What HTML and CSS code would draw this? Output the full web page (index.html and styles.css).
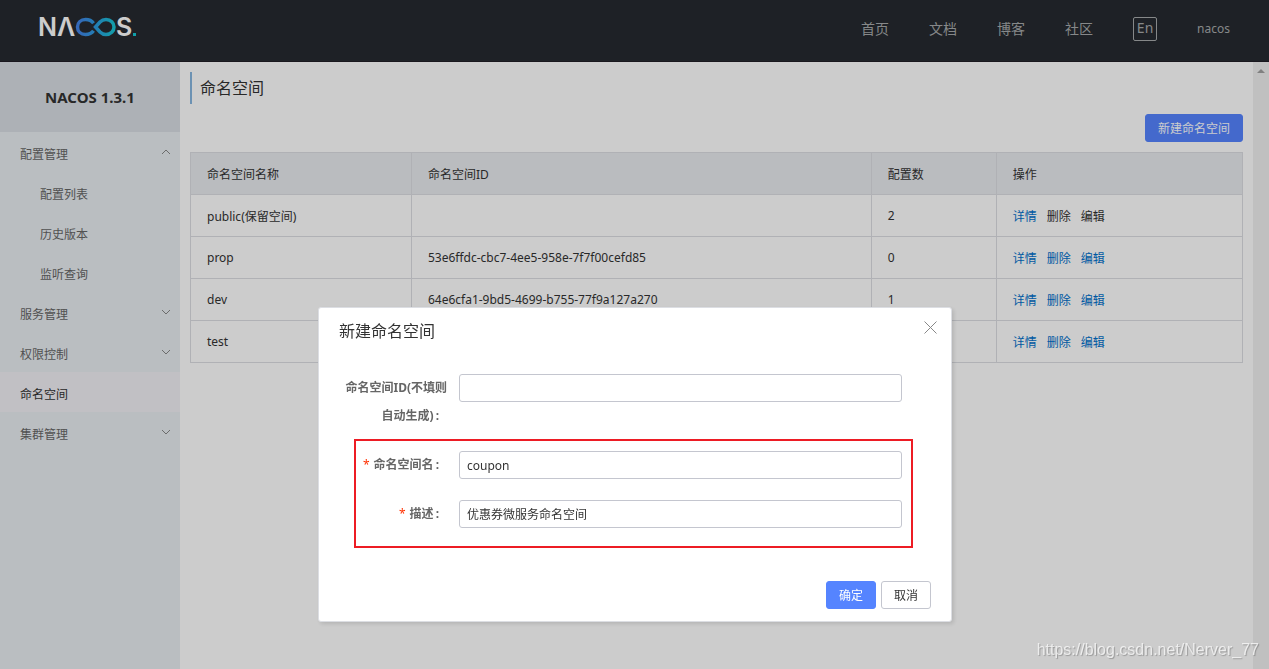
FILE: index.html
```html
<!DOCTYPE html>
<html lang="zh-CN">
<head>
<meta charset="utf-8">
<title>Nacos</title>
<link rel="stylesheet" href="styles.css">
</head>
<body>
<header class="topbar">
  <a class="logo" href="#">
    <svg width="104" height="36" viewBox="-4 -6 104 36" role="img" aria-label="NACOS.">
      <defs>
        <linearGradient id="loop" gradientUnits="userSpaceOnUse" x1="37" y1="0" x2="76" y2="0">
          <stop offset="0" stop-color="#4482e8"/>
          <stop offset="0.5" stop-color="#2b9fe0"/>
          <stop offset="1" stop-color="#16c9d4"/>
        </linearGradient>
      </defs>
      <text class="logo-text" x="-2" y="19">N</text>
      <text class="logo-text" x="17" y="19">Λ</text>
      <path d="M53.500 6.200C51.800 3.800 49.200 2.500 45.600 2.500C40.700 2.500 37.500 5.800 37.500 10S40.700 17.500 45.600 17.500C49.200 17.500 51.800 16.200 53.500 13.800M55.500 10L60 5C61.800 3.200 63.700 2.500 66 2.500C70.800 2.500 74 5.800 74 10S70.800 17.500 66 17.500C63.700 17.500 61.800 16.800 60 15Z" fill="none" stroke="url(#loop)" stroke-width="3.500"/>
      <text class="logo-text" x="76" y="19">S</text>
      <rect x="93" y="16" width="3" height="3" fill="#16c9d4"/>
    </svg>
  </a>
  <nav class="topnav">
    <a href="#">首页</a>
    <a href="#">文档</a>
    <a href="#">博客</a>
    <a href="#">社区</a>
    <button class="lang" type="button">En</button>
    <a class="user" href="#">nacos</a>
  </nav>
</header>
<div class="layout">
  <aside class="sidebar">
    <h1 class="product">NACOS 1.3.1</h1>
    <nav class="menu">
      <a href="#">配置管理<svg class="chevron" width="10" height="6" viewBox="0 0 10 6"><path d="M1 5L5 1L9 5"/></svg></a>
      <a class="sub" href="#">配置列表</a>
      <a class="sub" href="#">历史版本</a>
      <a class="sub" href="#">监听查询</a>
      <a href="#">服务管理<svg class="chevron" width="10" height="6" viewBox="0 0 10 6"><path d="M1 1L5 5L9 1"/></svg></a>
      <a href="#">权限控制<svg class="chevron" width="10" height="6" viewBox="0 0 10 6"><path d="M1 1L5 5L9 1"/></svg></a>
      <a class="current" href="#">命名空间</a>
      <a href="#">集群管理<svg class="chevron" width="10" height="6" viewBox="0 0 10 6"><path d="M1 1L5 5L9 1"/></svg></a>
    </nav>
  </aside>
  <main class="content">
    <h2 class="page-title">命名空间</h2>
    <div class="toolbar"><button class="btn primary" type="button">新建命名空间</button></div>
    <table class="grid">
      <colgroup><col class="col-name"><col class="col-id"><col class="col-count"><col class="col-ops"></colgroup>
      <thead><tr><th>命名空间名称</th><th>命名空间ID</th><th>配置数</th><th>操作</th></tr></thead>
      <tbody>
        <tr><td>public(保留空间)</td><td></td><td>2</td><td><div class="ops"><a href="#">详情</a><span>删除</span><span>编辑</span></div></td></tr>
        <tr><td>prop</td><td>53e6ffdc-cbc7-4ee5-958e-7f7f00cefd85</td><td>0</td><td><div class="ops"><a href="#">详情</a><a href="#">删除</a><a href="#">编辑</a></div></td></tr>
        <tr><td>dev</td><td>64e6cfa1-9bd5-4699-b755-77f9a127a270</td><td>1</td><td><div class="ops"><a href="#">详情</a><a href="#">删除</a><a href="#">编辑</a></div></td></tr>
        <tr><td>test</td><td></td><td></td><td><div class="ops"><a href="#">详情</a><a href="#">删除</a><a href="#">编辑</a></div></td></tr>
      </tbody>
    </table>
  </main>
  <div class="scroll-track"><svg width="8" height="4" viewBox="0 0 8 4"><path d="M4 0L8 4H0Z" fill="#a0a0a0"/></svg></div>
</div>
<div class="overlay">
  <form class="dialog" role="dialog" aria-labelledby="dialog-title">
    <div class="dialog-head">
      <h2 id="dialog-title">新建命名空间</h2>
      <button class="close" type="button" aria-label="关闭"><svg width="13" height="13" viewBox="0 0 13 13"><path d="M0.500 0.500L12.500 12.500M12.500 0.500L0.500 12.500"/></svg></button>
    </div>
    <div class="fields">
      <div class="field">
        <label for="ns-id">命名空间ID(不填则自动生成)</label>
        <input id="ns-id" type="text">
      </div>
      <div class="marked">
        <div class="field required">
          <label for="ns-name">命名空间名</label>
          <input id="ns-name" type="text" value="coupon">
        </div>
        <div class="field required">
          <label for="ns-desc">描述</label>
          <input id="ns-desc" type="text" value="优惠券微服务命名空间">
        </div>
      </div>
    </div>
    <div class="dialog-foot">
      <button class="btn primary" type="button">确定</button>
      <button class="btn" type="button">取消</button>
    </div>
  </form>
</div>
<div class="watermark">https://blog.csdn.net/Nerver_77</div>
</body>
</html>
```

FILE: styles.css
```css
* { box-sizing: border-box; }

body {
  margin: 0;
  min-height: 100vh;
  display: flex;
  flex-direction: column;
  font-family: "Noto Sans", "Noto Sans CJK SC", sans-serif;
  font-size: 12px;
  color: #333;
  background: #fff;
}

a { color: inherit; text-decoration: none; }
button, input { font: inherit; color: inherit; }
h1, h2 { margin: 0; }

.topbar {
  height: 62px;
  padding: 0 39px 3px 36px;
  display: flex;
  align-items: center;
  justify-content: space-between;
  background: #262a30;
  border-bottom: 1px solid #201d26;
}
.logo { display: flex; }
.logo-text { font: 600 25px Inter, sans-serif; fill: #fff; }

.topnav {
  display: flex;
  align-items: center;
  gap: 40px;
  font-size: 14px;
  line-height: 20px;
  color: #a8aaac;
}
.lang {
  width: 24px;
  height: 24px;
  padding: 0 0 2px;
  border: 1px solid #a8aaac;
  border-radius: 2px;
  background: none;
  line-height: 20px;
}
.topnav .user { font-size: 12px; }

.layout { flex: 1; display: flex; }

.sidebar { width: 180px; flex: none; background: #e9eef2; }
.product {
  height: 70px;
  line-height: 70px;
  text-align: center;
  font-size: 15px;
  font-weight: 700;
  background: #d9dee4;
}
.menu { display: flex; flex-direction: column; color: #666; }
.menu a {
  height: 40px;
  padding: 4px 9px 0 20px;
  display: flex;
  align-items: center;
  justify-content: space-between;
}
.menu .sub { padding-left: 40px; }
.menu .current { background: #f2f0f6; color: #333; }
.chevron { margin-bottom: 4px; fill: none; stroke: #888; }

.content { flex: 1; min-width: 0; padding: 10px; }
.page-title {
  height: 32px;
  line-height: 32px;
  padding-left: 8px;
  border-left: 2px solid #88b7e0;
  font-size: 16px;
  font-weight: 400;
}
.toolbar { padding: 10px 0; display: flex; justify-content: flex-end; }

.btn {
  height: 28px;
  padding: 1px 12px 0;
  border: 1px solid #c4c6cf;
  border-radius: 3px;
  background: #fff;
  line-height: 26px;
}
.btn.primary { border-color: #5584ff; background: #5584ff; color: #fff; }

.grid {
  width: 100%;
  table-layout: fixed;
  border-collapse: collapse;
}
.col-name { width: 21%; }
.col-id { width: 43.7%; }
.col-count { width: 11.9%; }
.grid th, .grid td {
  height: 42px;
  padding: 0 16px;
  border: 1px solid #dcdee3;
  text-align: left;
  font-weight: 400;
}
.grid th { background: #e9ebef; }
.ops { display: flex; gap: 10px; }
.ops a { color: #0070cc; }

.scroll-track {
  width: 16px;
  padding-top: 7px;
  display: flex;
  justify-content: center;
  align-items: flex-start;
  background: #f1f1f1;
}

.overlay {
  position: fixed;
  inset: 0;
  padding: 307px 0 0 1px;
  display: flex;
  justify-content: center;
  align-items: flex-start;
  background: rgba(0, 0, 0, 0.2);
}
.dialog {
  width: 50%;
  min-width: 600px;
  padding: 11px 20px 12px;
  border: 1px solid #dcdee3;
  border-radius: 3px;
  background: #fff;
  box-shadow: 2px 2px 4px rgba(0, 0, 0, 0.12);
}
.dialog-head {
  margin-right: -6px;
  display: flex;
  justify-content: space-between;
  align-items: flex-start;
}
.dialog-head h2 { font-size: 16px; font-weight: 400; line-height: 24px; }
.close {
  width: 13px;
  height: 16px;
  padding: 0;
  border: 0;
  background: none;
}
.close svg { display: block; fill: none; stroke: #888; }

.fields {
  padding: 31px 29px 0 0;
  display: flex;
  flex-direction: column;
  gap: 21px;
}
.field { display: flex; align-items: flex-start; gap: 12px; }
.field label {
  width: 108px;
  flex: none;
  line-height: 28px;
  text-align: right;
  font-weight: 700;
  color: #666;
}
.field label::after { content: ":"; margin: 0 8px 0 2px; }
.required label::before { content: "*"; margin-right: 4px; color: #ff3000; font-weight: 400; }
.field input {
  flex: 1;
  min-width: 0;
  height: 28px;
  padding: 0 7px;
  border: 1px solid #c4c6cf;
  border-radius: 3px;
  background: #fff;
}
.marked {
  position: relative;
  display: flex;
  flex-direction: column;
  gap: 21px;
}
.marked::after {
  content: "";
  position: absolute;
  inset: -12px -11px -20px 15px;
  border: 2px solid #ed1c24;
  pointer-events: none;
}
.dialog-foot {
  padding-top: 53px;
  display: flex;
  justify-content: flex-end;
  gap: 5px;
}

.watermark {
  position: fixed;
  right: 10px;
  bottom: 10px;
  font: 16px/18px "Liberation Sans", sans-serif;
  color: rgba(255, 255, 255, 0.7);
  text-shadow: 1px 1px 1px rgba(0, 0, 0, 0.25);
}
```
